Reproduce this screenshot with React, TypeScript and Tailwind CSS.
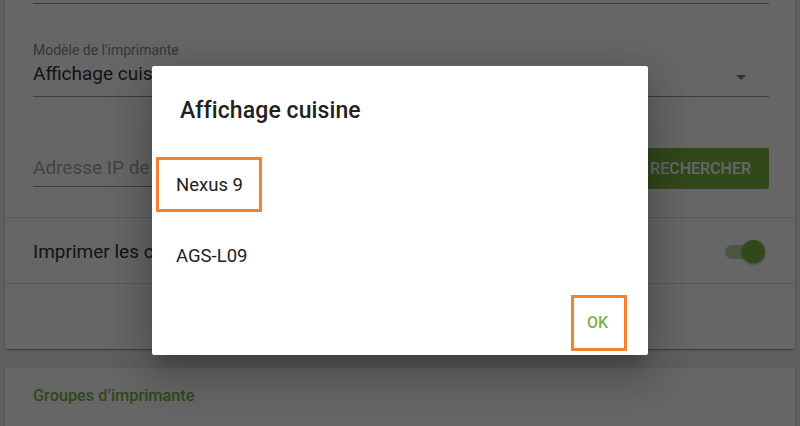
import React from "react";

export default function App() {
  return (
    <div
      className="relative h-[426px] w-[800px] overflow-hidden bg-[#eeeeee]"
      style={{ fontFamily: "Roboto, 'Noto Sans', sans-serif" }}
    >
      {/* Underlying settings page */}
      <div className="mx-[5px] flex flex-col">
        <div className="rounded-b-[2px] bg-white shadow-[0_1px_3px_rgba(0,0,0,0.2),0_1px_1px_rgba(0,0,0,0.14),0_2px_1px_-1px_rgba(0,0,0,0.12)]">
          <div className="border-b border-[#e0e0e0] pb-[28px] pl-[28px] pr-[26px]">
            <div className="h-[4px] border-b border-[#999999]" />
            <div className="mt-[38px] h-[16px] text-[14px] leading-[16px] text-[#8a8a8a]">
              Modèle de l'imprimante
            </div>
            <div className="mt-[4px] flex h-[35px] items-start justify-between border-b border-[#999999]">
              <span className="text-[19px] leading-[24px] text-[#333333]">Affichage cuisine</span>
              <svg width="10" height="5" viewBox="0 0 10 5" className="mr-[23px] mt-[13px]">
                <path d="M0 0 L10 0 L5 5 Z" fill="#757575" />
              </svg>
            </div>
            <div className="mt-[51px] flex h-[41px] items-start gap-[18px]">
              <div className="h-[39px] flex-1 border-b border-[#999999] pt-[8px] text-[19px] leading-[24px] text-[#a8a8a8]">
                Adresse IP de l'imprimante
              </div>
              <button className="flex h-[41px] items-center rounded-[2px] bg-[#7cb342] pl-[20px] pr-[18px] text-[16px] font-medium text-white">
                RECHERCHER
              </button>
            </div>
          </div>
          <div className="flex h-[66px] items-center justify-between border-b border-[#e0e0e0] pl-[28px] pr-[30px] pt-[2px]">
            <span className="text-[19px] leading-[24px] text-[#333333]">
              Imprimer les commandes annulées
            </span>
            <div className="relative flex h-[23px] w-[40px] items-center">
              <div className="h-[14px] w-[38px] rounded-full bg-[#bed9a0]" />
              <div className="absolute right-0 top-0 h-[23px] w-[23px] rounded-full bg-[#7cb342] shadow-[0_1px_3px_rgba(0,0,0,0.4)]" />
            </div>
          </div>
          <div className="h-[65px]" />
        </div>
        <div className="mt-[19px] h-[80px] rounded-[2px] bg-white pl-[28px] pt-[16px] shadow-[0_1px_3px_rgba(0,0,0,0.2),0_1px_1px_rgba(0,0,0,0.14),0_2px_1px_-1px_rgba(0,0,0,0.12)]">
          <div className="text-[16.3px] font-medium leading-[24px] text-[#7cb342]">
            Groupes d’imprimante
          </div>
        </div>
      </div>

      {/* Scrim */}
      <div className="absolute inset-0 bg-black/60" />

      {/* Dialog */}
      <div className="absolute left-[152px] top-[66px] flex w-[496px] flex-col rounded-[2px] bg-white shadow-[0_11px_15px_-7px_rgba(0,0,0,0.2),0_24px_38px_3px_rgba(0,0,0,0.14),0_9px_46px_8px_rgba(0,0,0,0.12)]">
        <div className="pl-[28px] pt-[31px] text-[23px] font-medium leading-[28px] tracking-[0.1px] text-[#212121]">
          Affichage cuisine
        </div>
        <div className="mt-[32px] flex flex-col gap-[16px]">
          <div className="ml-[4px] flex h-[55px] w-[106px] items-center border-[3px] border-[#f08232] pl-[17px] text-[18.5px] leading-[24px] text-[#212121]">
            Nexus 9
          </div>
          <div className="flex h-[55px] items-center pl-[24px] text-[18.5px] leading-[24px] text-[#212121]">
            AGS-L09
          </div>
        </div>
        <div className="mb-[4px] mr-[21px] mt-[12px] flex justify-end">
          <div className="flex h-[56px] w-[56px] items-center justify-center border-[3px] border-[#f08232] pr-[3px] text-[16px] font-medium text-[#7cb342]">
            OK
          </div>
        </div>
      </div>
    </div>
  );
}
